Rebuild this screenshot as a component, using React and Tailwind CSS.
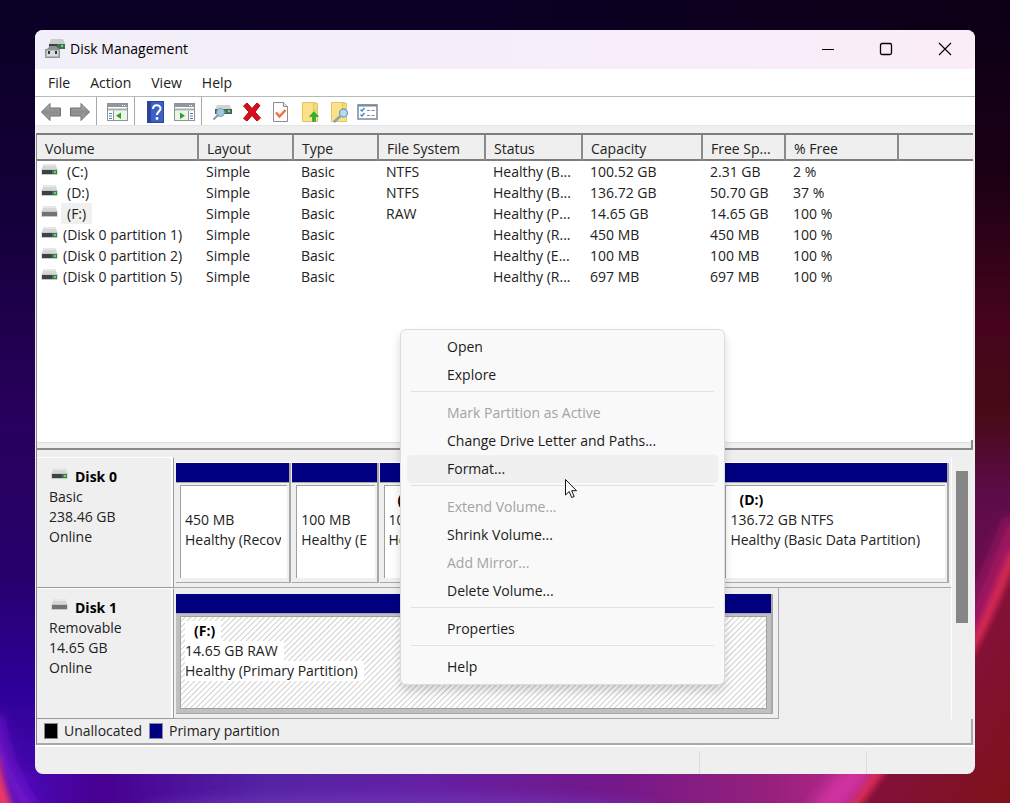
import { useState } from "react";
import clsx from "clsx";

const menus = ["File", "Action", "View", "Help"];

const columns = [
  { label: "Volume", width: "w-[161px]" },
  { label: "Layout", width: "w-[95px]" },
  { label: "Type", width: "w-[85px]" },
  { label: "File System", width: "w-[107px]" },
  { label: "Status", width: "w-[97px]" },
  { label: "Capacity", width: "w-[120px]" },
  { label: "Free Sp...", width: "w-[83px]" },
  { label: "% Free", width: "w-[113px]" },
];

const volumes = [
  { name: "(C:)", letter: true, fs: "NTFS", status: "Healthy (B...", capacity: "100.52 GB", free: "2.31 GB", percent: "2 %" },
  { name: "(D:)", letter: true, fs: "NTFS", status: "Healthy (B...", capacity: "136.72 GB", free: "50.70 GB", percent: "37 %" },
  { name: "(F:)", letter: true, removable: true, fs: "RAW", status: "Healthy (P...", capacity: "14.65 GB", free: "14.65 GB", percent: "100 %" },
  { name: "(Disk 0 partition 1)", fs: "", status: "Healthy (R...", capacity: "450 MB", free: "450 MB", percent: "100 %" },
  { name: "(Disk 0 partition 2)", fs: "", status: "Healthy (E...", capacity: "100 MB", free: "100 MB", percent: "100 %" },
  { name: "(Disk 0 partition 5)", fs: "", status: "Healthy (R...", capacity: "697 MB", free: "697 MB", percent: "100 %" },
];

const disk0 = [
  { name: "", size: "450 MB", status: "Healthy (Recov" },
  { name: "", size: "100 MB", status: "Healthy (E" },
  { name: "(C:)", size: "100.52 GB", status: "Healthy" },
  { name: "", size: "697 MB", status: "Healthy" },
  { name: "(D:)", size: "136.72 GB NTFS", status: "Healthy (Basic Data Partition)" },
];

const contextMenu = [
  [{ label: "Open" }, { label: "Explore" }],
  [
    { label: "Mark Partition as Active", disabled: true },
    { label: "Change Drive Letter and Paths..." },
    { label: "Format..." },
  ],
  [
    { label: "Extend Volume...", disabled: true },
    { label: "Shrink Volume..." },
    { label: "Add Mirror...", disabled: true },
    { label: "Delete Volume..." },
  ],
  [{ label: "Properties" }],
  [{ label: "Help" }],
];

function Wallpaper() {
  return (
    <svg
      className="absolute inset-0 h-full w-full"
      viewBox="0 0 1010 803"
      preserveAspectRatio="none"
      aria-hidden="true"
    >
      <defs>
        <linearGradient id="left" x1="0" y1="0" x2="0" y2="1">
          <stop offset="0" stopColor="#0b0026" />
          <stop offset="0.25" stopColor="#14003a" />
          <stop offset="0.5" stopColor="#28005c" />
          <stop offset="0.7" stopColor="#26006a" />
          <stop offset="0.85" stopColor="#2e0098" />
          <stop offset="1" stopColor="#4a0ab0" />
        </linearGradient>
        <linearGradient id="right" x1="0" y1="0" x2="0" y2="1">
          <stop offset="0" stopColor="#0d0016" />
          <stop offset="0.2" stopColor="#1c0014" />
          <stop offset="0.38" stopColor="#45041c" />
          <stop offset="0.5" stopColor="#480a16" />
          <stop offset="0.6" stopColor="#5c0c48" />
          <stop offset="0.75" stopColor="#6c1050" />
        </linearGradient>
        <linearGradient id="top" x1="0" y1="0" x2="1" y2="0">
          <stop offset="0" stopColor="#0b0026" />
          <stop offset="0.5" stopColor="#0c0024" />
          <stop offset="1" stopColor="#0d0016" />
        </linearGradient>
        <linearGradient id="bottom" x1="0" y1="0" x2="1" y2="0">
          <stop offset="0" stopColor="#4a08b8" />
          <stop offset="0.08" stopColor="#470092" />
          <stop offset="0.25" stopColor="#5424a4" />
          <stop offset="0.4" stopColor="#6420a4" />
          <stop offset="0.6" stopColor="#74188a" />
          <stop offset="0.75" stopColor="#94207c" />
          <stop offset="0.85" stopColor="#b82888" />
        </linearGradient>
        <linearGradient id="red" x1="0" y1="0" x2="1" y2="1">
          <stop offset="0" stopColor="#80103e" />
          <stop offset="0.5" stopColor="#84103c" />
          <stop offset="1" stopColor="#7e1218" />
        </linearGradient>
        <filter id="soft" x="-50%" y="-50%" width="200%" height="200%">
          <feGaussianBlur stdDeviation="7" />
        </filter>
        <filter id="edge" x="-50%" y="-50%" width="200%" height="200%">
          <feGaussianBlur stdDeviation="3" />
        </filter>
      </defs>
      <rect width="1010" height="803" fill="url(#top)" />
      <rect y="24" width="505" height="779" fill="url(#left)" />
      <rect x="900" y="24" width="110" height="779" fill="url(#right)" />
      <rect x="20" y="772" width="990" height="31" fill="url(#bottom)" />
      <ellipse cx="400" cy="812" rx="260" ry="16" fill="#7038b8" filter="url(#soft)" opacity="0.8" />
      <path d="M-8 715Q2 775 34 815" fill="none" stroke="#7418cc" strokeWidth="16" filter="url(#soft)" />
      <path d="M-9 755Q-4 785 9 818" fill="none" stroke="#f03868" strokeWidth="14" filter="url(#edge)" />
      <path d="M1020 520L960 665" stroke="#a01860" strokeWidth="26" filter="url(#soft)" />
      <path d="M820 815L862 765" stroke="#d030a0" strokeWidth="26" filter="url(#soft)" />
      <path d="M1010 560Q985 625 970 655L884 766L858 803H1010Z" fill="url(#red)" />
      <path d="M1014 552Q990 615 968 655L878 774L852 810" fill="none" stroke="#d82c52" strokeWidth="9" filter="url(#edge)" />
    </svg>
  );
}

function DriveIcon({ removable }) {
  return (
    <svg width="17" height="14" viewBox="0 0 17 14" aria-hidden="true">
      <path d="M2.500 1h12l2 6h-16z" fill="#d4d6d8" />
      <path d="M3 1h11l.7 2H2.300z" fill="#e6e8e9" />
      <rect x="0.500" y="6" width="16" height="6" rx="0.500" fill="#c4c6c8" />
      <rect x="1" y="7" width="15" height="4" fill={removable ? "#707274" : "#3e4244"} />
      {!removable && <rect x="11" y="7" width="5" height="4" fill="#3f7a50" />}
      {!removable && <rect x="13" y="8" width="2" height="2" fill="#58e070" />}
    </svg>
  );
}

function AppIcon() {
  return (
    <svg width="21" height="20" viewBox="0 0 21 20" aria-hidden="true">
      <path d="M6 0h12l2 5H4z" fill="#c9cbcd" />
      <rect x="4" y="5" width="16" height="5" fill="#3c4042" />
      <rect x="12" y="5" width="8" height="5" fill="#3d7350" />
      <rect x="16" y="6" width="2" height="2" fill="#5fe27b" />
      <path d="M5 7h6l4 4H1z" fill="#8e9193" />
      <rect x="0.500" y="10.500" width="14" height="8" fill="#b4b6b8" stroke="#94979a" />
      <rect x="2" y="12" width="11" height="5" fill="#d9dbdc" />
      <rect x="3" y="12" width="2" height="3" fill="#333" />
      <rect x="10" y="12" width="2" height="3" fill="#333" />
    </svg>
  );
}

function ArrowIcon({ flip }) {
  return (
    <svg width="22" height="20" viewBox="0 0 22 20" className={clsx(flip && "-scale-x-100")} aria-hidden="true">
      <defs>
        <linearGradient id="arrow" x1="0" y1="0" x2="0" y2="1">
          <stop offset="0" stopColor="#b4b4b4" />
          <stop offset="0.5" stopColor="#8c8c8c" />
          <stop offset="1" stopColor="#a6a6a6" />
        </linearGradient>
      </defs>
      <path d="M1.500 10L10 1.500V6h10.500v8H10v4.500z" fill="url(#arrow)" stroke="#6f6f6f" strokeLinejoin="round" />
    </svg>
  );
}

function ConsoleIcon({ right }) {
  return (
    <svg width="21" height="20" viewBox="0 0 21 20" aria-hidden="true">
      <rect x="0.500" y="1.500" width="20" height="17" fill="#fff" stroke="#8b939b" />
      <rect x="1" y="2" width="19" height="3" fill="#8f979f" />
      <path d="M15 3.500h1m1 0h1" stroke="#fff" />
      <path d="M1 7.500h19" stroke="#a8aeb4" strokeWidth="2" />
      <path d={right ? "M14.500 9v9" : "M6.500 9v9"} stroke="#8b939b" />
      <path d={right ? "M16 11.500h3m-3 2.500h3m-3 2.500h3" : "M2 11.500h3m-3 2.500h3m-3 2.500h3"} stroke="#4a7ca8" />
      <rect x={right ? 1 : 7} y="9" width="13" height="9" fill="#ecf5e8" />
      <path d={right ? "M6 10.500v6.500l5-3.200z" : "M14 10.500v6.500l-5-3.200z"} fill="#2fa02c" />
    </svg>
  );
}

function HelpIcon() {
  return (
    <svg width="17" height="22" viewBox="0 0 17 22" aria-hidden="true">
      <rect x="0.500" y="0.500" width="16" height="21" fill="#3f5fc8" stroke="#2a469c" />
      <rect x="1" y="1" width="3" height="20" fill="#2a429c" />
      <path d="M6 8c0-5 7.500-5 7.500-.5 0 3-3.500 3.200-3.500 6.500" fill="none" stroke="#fff" strokeWidth="2" />
      <circle cx="10" cy="17.500" r="1.400" fill="#fff" />
    </svg>
  );
}

function RescanIcon() {
  return (
    <svg width="21" height="20" viewBox="0 0 21 20" aria-hidden="true">
      <path d="M5 3h13l2 5H3z" fill="#d0d4d6" />
      <rect x="3" y="7" width="17" height="5" fill="#50565a" />
      <rect x="13" y="8" width="6" height="3" fill="#3d8450" />
      <rect x="16" y="8" width="2" height="2" fill="#62dc7c" />
      <circle cx="8.500" cy="10.500" r="4" fill="#9fcbe2" stroke="#8199a8" />
      <path d="M5.500 13.500L2 17" stroke="#8a9ba6" strokeWidth="2" strokeLinecap="round" />
    </svg>
  );
}

function DeleteIcon() {
  return (
    <svg width="20" height="20" viewBox="0 0 20 20" aria-hidden="true">
      <path
        d="M1.500 4L5 1l5 5.500L15 1l3 2.500L13 10l5.500 6-3.500 3-5-5.500L5 19l-3.500-2.500L7 10z"
        fill="#d90d1b"
        stroke="#b00a14"
      />
    </svg>
  );
}

function PageCheckIcon() {
  return (
    <svg width="17" height="22" viewBox="0 0 17 22" aria-hidden="true">
      <path d="M1.500 1.500h10l4 4v15h-14z" fill="#fdfdfd" stroke="#8d8d8d" />
      <path d="M11.500 1.500v4h4" fill="#e4e4e4" stroke="#8d8d8d" />
      <path d="M4 11.500l3.500 4 6-6.500" fill="none" stroke="#f0713a" strokeWidth="2.500" />
    </svg>
  );
}

function FolderIcon({ search }) {
  return (
    <svg width="20" height="22" viewBox="0 0 20 22" aria-hidden="true">
      <path d="M2.500 1.500h11l4 1v18h-15z" fill="#fbe289" stroke="#e0c468" />
      <path d="M13.500 1.500v8h4v-7z" fill="#f5d974" stroke="#e0c468" />
      {search ? (
        <g>
          <path d="M11 15.500L5.500 20.500" stroke="#8fa0a8" strokeWidth="2.500" strokeLinecap="round" />
          <circle cx="14.500" cy="12" r="4" fill="#b4dcee" stroke="#7ba0b4" strokeWidth="1.300" />
        </g>
      ) : (
        <path d="M14 10.500l4.500 5H15.500v5h-3v-5h-3z" fill="#2fb42c" stroke="#1f9c20" strokeWidth="0.600" />
      )}
    </svg>
  );
}

function ListIcon() {
  return (
    <svg width="21" height="18" viewBox="0 0 21 18" aria-hidden="true">
      <rect x="1" y="2" width="19" height="14" fill="#fff" stroke="#7c8894" strokeWidth="1.500" />
      <path d="M1 2.500h19" stroke="#7c8894" strokeWidth="2" />
      <path d="M3.500 6.500l1.500 1.500 2.500-3M3.500 11.500l1.500 1.500 2.500-3" fill="none" stroke="#3c86c8" strokeWidth="1.300" />
      <path d="M10 7.500h3m1.500 0h3M10 12.500h3m1.500 0h3" stroke="#7c8894" />
    </svg>
  );
}

const toolbar = [
  [
    { label: "Back", icon: <ArrowIcon /> },
    { label: "Forward", icon: <ArrowIcon flip /> },
  ],
  [{ label: "Show/Hide Console Tree", icon: <ConsoleIcon /> }],
  [
    { label: "Help Topics", icon: <HelpIcon /> },
    { label: "Show/Hide Action Pane", icon: <ConsoleIcon right /> },
  ],
  [
    { label: "Rescan Disks", icon: <RescanIcon /> },
    { label: "Delete", icon: <DeleteIcon /> },
    { label: "Properties", icon: <PageCheckIcon /> },
    { label: "Open", icon: <FolderIcon /> },
    { label: "Explore", icon: <FolderIcon search /> },
    { label: "Settings", icon: <ListIcon /> },
  ],
];

function TitleBar() {
  return (
    <header className="flex h-[39px] items-center bg-linear-to-r from-[#f1eff9] to-[#faedf8] pb-[2px] pl-[10px]">
      <AppIcon />
      <h1 className="flex-1 pl-1 text-sm text-black">Disk Management</h1>
      <button className="flex h-full w-[58px] items-center justify-center" aria-label="Minimize">
        <svg width="14" height="14" viewBox="0 0 14 14">
          <path d="M1 7.500h12" stroke="#000" strokeWidth="1.200" />
        </svg>
      </button>
      <button className="flex h-full w-[58px] items-center justify-center" aria-label="Maximize">
        <svg width="14" height="14" viewBox="0 0 14 14">
          <rect x="1.500" y="1.500" width="11" height="11" rx="1.500" fill="none" stroke="#000" strokeWidth="1.300" />
        </svg>
      </button>
      <button className="flex h-full w-[60px] items-center justify-center" aria-label="Close">
        <svg width="14" height="14" viewBox="0 0 14 14">
          <path d="M1 1l12 12M13 1L1 13" stroke="#000" strokeWidth="1.200" />
        </svg>
      </button>
    </header>
  );
}

function Toolbar() {
  return (
    <div className="flex h-[29px] items-center border-b border-[#e4e4e4] bg-white pl-px">
      {toolbar.map((group, i) => (
        <div key={i} className="flex h-full items-center">
          {i > 0 && (
            <div className="flex h-full w-[9px] pl-[2px]">
              <div className="w-px bg-[#a8a8a8]" />
            </div>
          )}
          {group.map((tool) => (
            <button key={tool.label} aria-label={tool.label} className="flex h-full w-[29px] items-center justify-center pt-px">
              {tool.icon}
            </button>
          ))}
        </div>
      ))}
    </div>
  );
}

function VolumeList() {
  return (
    <div className="flex-1 border-t-2 border-[#7d7d7d] bg-white">
      <table className="w-full table-fixed border-collapse text-left">
        <thead>
          <tr className="h-6 border-b-2 border-[#7d7d7d] bg-[#efefef]">
            {columns.map((col) => (
              <th
                key={col.label}
                className={clsx(
                  "border-r-2 border-r-[#8a8a8a] px-2 pt-1 text-sm leading-5 font-normal whitespace-nowrap",
                  col.width
                )}
              >
                {col.label}
              </th>
            ))}
            <th aria-label="Empty" />
          </tr>
        </thead>
        <tbody>
          <tr className="h-px" aria-hidden="true" />
          {volumes.map((v) => (
            <tr key={v.name} className="h-[21px] leading-[21px] whitespace-nowrap">
              <td className="p-0">
                <div className="flex items-center pl-1">
                  <span className="pb-1">
                    <DriveIcon removable={v.removable} />
                  </span>
                  <span className={clsx(v.letter ? "ml-[3px] px-[6px]" : "pl-[5px]", v.removable && "bg-[#f0f0f0]")}>
                    {v.name}
                  </span>
                </div>
              </td>
              <td className="px-2 py-0">Simple</td>
              <td className="px-2 py-0">Basic</td>
              <td className="px-2 py-0">{v.fs}</td>
              <td className="px-2 py-0">{v.status}</td>
              <td className="px-2 py-0">{v.capacity}</td>
              <td className="px-2 py-0">{v.free}</td>
              <td className="px-2 py-0">{v.percent}</td>
              <td className="p-0" />
            </tr>
          ))}
        </tbody>
      </table>
    </div>
  );
}

function DiskLabel({ name, removable, lines }) {
  return (
    <div className="w-[137px] shrink-0 border-t border-r border-b border-t-white border-r-[#9a9a9a] border-b-[#9a9a9a] leading-5">
      <div className="h-full border-r-2 border-white pt-[9px] pl-3">
        <div className="flex">
          <span className="w-[26px] pl-[2px]">
            <DriveIcon removable={removable} />
          </span>
          <h2 className="font-bold text-black">{name}</h2>
        </div>
        {lines.map((line) => (
          <p key={line}>{line}</p>
        ))}
      </div>
    </div>
  );
}

function Partition({ name, size, status, selected }) {
  return (
    <div className="flex min-w-0 flex-col border-r-2 border-b border-[#a8a8a8] bg-[#efefef]">
      <div className="h-[19px] bg-[#000080]" />
      <div className={clsx("flex flex-1 border-t border-[#a8a8a8] pt-[2px] pb-1 pl-1", selected ? "bg-[#c0c0c0] pr-1" : "pr-[2px]")}>
        <div
          className={clsx(
            "flex min-w-0 flex-1 flex-col items-start overflow-hidden border-t border-l border-[#a0a0a0] pt-1 pl-1 leading-5 whitespace-nowrap",
            selected
              ? "border-r border-b bg-[repeating-linear-gradient(135deg,#fff_0px,#fff_2px,#d0d0d0_3px,#fff_4px)]"
              : "bg-white pr-1"
          )}
        >
          <p className={clsx("h-5 pl-[9px] font-bold text-black", selected && "bg-white pr-[6px]")}>{name}</p>
          <p className={clsx("max-w-full overflow-hidden", selected && "bg-white pr-[6px]")}>{size}</p>
          <p className={clsx("max-w-full overflow-hidden", selected && "bg-white pr-[6px]")}>{status}</p>
        </div>
      </div>
    </div>
  );
}

function DiskPane() {
  return (
    <div className="flex pt-[7px]">
      <div className="min-w-0 flex-1">
        <section className="flex h-[131px]">
          <DiskLabel name="Disk 0" lines={["Basic", "238.46 GB", "Online"]} />
          <div className="flex-1 border-b border-[#a8a8a8] px-[2px] pt-[5px] pb-1">
            <div className="grid h-full grid-cols-[115fr_86fr_219fr_120fr_227fr] gap-px border-t border-white">
              {disk0.map((p, i) => (
                <Partition key={i} {...p} />
              ))}
            </div>
          </div>
        </section>
        <section className="flex h-[131px]">
          <DiskLabel name="Disk 1" removable lines={["Removable", "14.65 GB", "Online"]} />
          <div className="flex-1">
            <div className="h-full w-[605px] max-w-full border-r border-b border-[#a8a8a8] pt-[6px] pr-[5px] pb-1 pl-[2px]">
              <div className="grid h-full">
                <Partition name="(F:)" size="14.65 GB RAW" status="Healthy (Primary Partition)" selected />
              </div>
            </div>
          </div>
        </section>
      </div>
      <div className="w-[22px] border-l border-white pt-[14px] pl-1">
        <div className="h-[152px] w-3 bg-[#868686]" />
      </div>
    </div>
  );
}

function ContextMenu() {
  const [active, setActive] = useState("Format...");

  return (
    <div
      role="menu"
      className="absolute top-[299px] left-[365px] w-[325px] rounded-md border border-[#dcdcdc] bg-[#f9f9f9] px-[6px] py-[3px] shadow-[0_6px_10px_rgba(0,0,0,0.16)]"
    >
      {contextMenu.map((group, i) => (
        <div key={i}>
          {i > 0 && <div className="mx-1 mt-[2px] mb-[7px] h-px bg-[#e2e2e2]" />}
          {group.map((item) => (
            <button
              key={item.label}
              role="menuitem"
              disabled={item.disabled}
              onMouseEnter={() => setActive(item.label)}
              className={clsx(
                "block h-7 w-full rounded-sm pl-10 text-left text-sm",
                item.disabled ? "text-[#a3a3a3]" : "text-[#1b1b1b]",
                active === item.label && "bg-[#f0f0f0]"
              )}
            >
              {item.label}
            </button>
          ))}
        </div>
      ))}
    </div>
  );
}

function Cursor() {
  return (
    <svg className="absolute top-[448px] left-[529px]" width="14" height="22" viewBox="0 0 14 22" aria-hidden="true">
      <path d="M1.500 1.500v15.500l3.700-3.500 2.500 6 2.500-1-2.500-5.800h4.800z" fill="#fff" stroke="#111" />
    </svg>
  );
}

export default function App() {
  return (
    <div className="relative flex min-h-screen px-[35px] pt-[30px] pb-[29px] font-['Open_Sans','Noto_Sans',sans-serif] text-sm text-[#222]">
      <Wallpaper />
      <main className="relative flex min-w-0 flex-1 flex-col rounded-lg bg-[#efefef]">
        <div className="flex flex-1 flex-col overflow-hidden rounded-lg">
          <TitleBar />
          <nav className="flex h-7 items-center border-b border-[#b8b8b8] bg-white pl-[3px]">
            {menus.map((m) => (
              <button key={m} className="px-[10px]">
                {m}
              </button>
            ))}
          </nav>
          <Toolbar />
          <div className="mt-[7px] mr-[2px] ml-px flex flex-1 flex-col border-l border-[#8a8a8a]">
            <VolumeList />
            <div className="flex h-[10px] flex-col border-r-2 border-b-2 border-[#8a8a8a]">
              <div className="h-[3px] border-b border-[#dedede] bg-white" />
            </div>
            <DiskPane />
            <footer className="flex h-[26px] items-center border-r-2 border-b-2 border-[#a8a8a8] pl-[7px]">
              <span className="h-4 w-[14px] border border-[#888] bg-black" />
              <span className="pl-[6px]">Unallocated</span>
              <span className="ml-[7px] h-4 w-[14px] border border-[#8888b0] bg-[#000080]" />
              <span className="pl-[6px]">Primary partition</span>
            </footer>
          </div>
          <div className="flex h-[29px] border-t-2 border-white pt-1">
            <div className="flex-1 border-r border-[#dcdcdc]" />
            <div className="w-[167px] border-r border-[#dcdcdc]" />
            <div className="w-[108px]" />
          </div>
        </div>
        <ContextMenu />
        <Cursor />
      </main>
    </div>
  );
}
